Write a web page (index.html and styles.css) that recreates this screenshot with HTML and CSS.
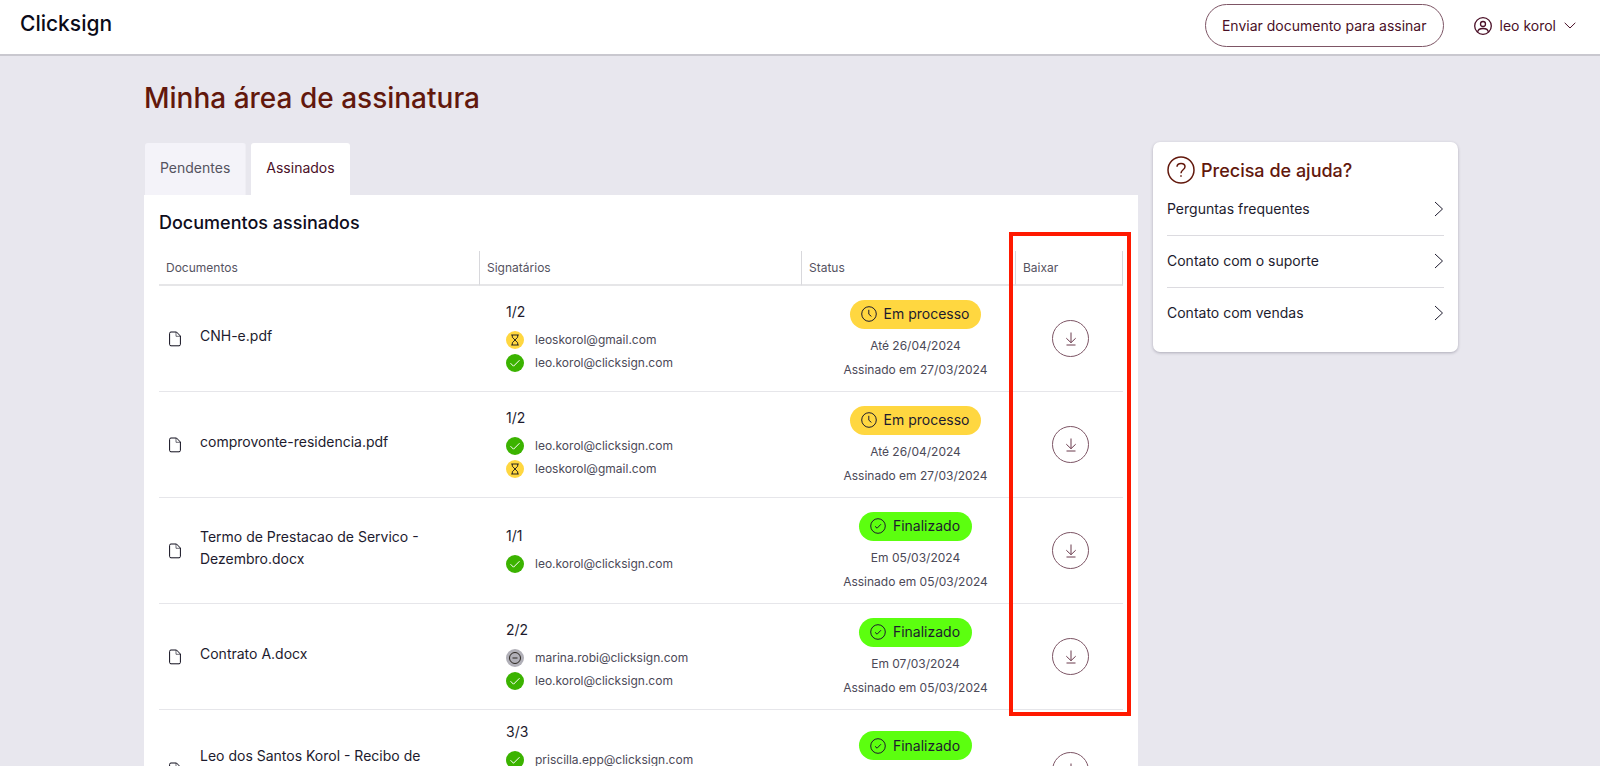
FILE: index.html
```html
<!DOCTYPE html>
<html lang="pt-BR">
<head>
<meta charset="utf-8">
<meta name="viewport" content="width=device-width, initial-scale=1">
<title>Minha área de assinatura</title>
<link rel="stylesheet" href="styles.css">
</head>
<body>
<svg class="sprite" aria-hidden="true">
  <symbol id="file" viewBox="0 0 12 16"><path d="M7.500 1H2Q.6 1 .6 2.400V13.400Q.6 14.800 2 14.800H10Q11.400 14.800 11.400 13.400V5Z"/><path d="M7 1V5.300H11.400" opacity=".6"/></symbol>
  <symbol id="hourglass" viewBox="0 0 18 18"><path d="M5.200 4H12.800M5.200 14H12.800M6.300 4V6.200L9 9L6.300 11.800V14M11.700 4V6.200L9 9L11.700 11.800V14"/></symbol>
  <symbol id="check" viewBox="0 0 18 18"><path d="M4.500 9.200L7.500 12.200L13.500 6.200"/></symbol>
  <symbol id="minus" viewBox="0 0 18 18"><circle cx="9" cy="9" r="5.500"/><path d="M6.500 9H11.500"/></symbol>
  <symbol id="clock" viewBox="0 0 16 16"><circle cx="8" cy="8" r="7.300"/><path d="M7.800 3.800V8.200L10.400 10.400"/></symbol>
  <symbol id="done" viewBox="0 0 16 16"><circle cx="8" cy="8" r="7.300"/><path d="M5 8.300L7.100 10.200L11 6.200"/></symbol>
  <symbol id="download" viewBox="0 0 12 14"><path d="M6 .5V10.500M1.300 6.200L6 10.700L10.700 6.200M1.500 13H10.500"/></symbol>
  <symbol id="right" viewBox="0 0 10 16"><path d="M1 1L8.500 8L1 15"/></symbol>
</svg>
<header class="topbar">
  <a class="logo" href="#">Clicksign</a>
  <div class="actions">
    <button class="send" type="button">Enviar documento para assinar</button>
    <button class="user" type="button">
      <svg class="avatar" viewBox="0 0 18 18"><circle cx="9" cy="9" r="8.300"/><circle cx="9" cy="7" r="2.500"/><path d="M3.600 15.200Q4 11.500 9 11.500T14.400 15.200"/></svg>
      leo korol
      <svg class="caret" viewBox="0 0 12 7"><path d="M.7 .8L6 6L11.300 .8"/></svg>
    </button>
  </div>
</header>
<main class="page">
  <h1 class="title">Minha área de assinatura</h1>
  <div class="columns">
    <section class="documents">
      <nav class="tabs">
        <a class="tab" href="#">Pendentes</a>
        <a class="tab active" href="#">Assinados</a>
      </nav>
      <div class="panel">
        <h2 class="heading">Documentos assinados</h2>
        <div class="table-wrap">
        <table class="table">
          <colgroup><col class="c-doc"><col class="c-sign"><col class="c-status"><col class="c-get"></colgroup>
          <thead><tr><th>Documentos</th><th>Signatários</th><th>Status</th><th>Baixar</th></tr></thead>
          <tbody>
            <tr>
              <td><div class="doc"><svg class="file"><use href="#file"/></svg><span class="name">CNH-e.pdf</span></div></td>
              <td><div class="signers"><p class="count">1/2</p><ul class="list">
                <li><svg class="dot wait"><use href="#hourglass"/></svg>leoskorol@gmail.com</li>
                <li><svg class="dot ok"><use href="#check"/></svg>leo.korol@clicksign.com</li></ul></div></td>
              <td><div class="status"><span class="badge progress"><svg><use href="#clock"/></svg>Em processo</span><span>Até 26/04/2024</span><span>Assinado em 27/03/2024</span></div></td>
              <td><button class="get" type="button" aria-label="Baixar"><svg><use href="#download"/></svg></button></td>
            </tr>
            <tr>
              <td><div class="doc"><svg class="file"><use href="#file"/></svg><span class="name">comprovonte-residencia.pdf</span></div></td>
              <td><div class="signers"><p class="count">1/2</p><ul class="list">
                <li><svg class="dot ok"><use href="#check"/></svg>leo.korol@clicksign.com</li>
                <li><svg class="dot wait"><use href="#hourglass"/></svg>leoskorol@gmail.com</li></ul></div></td>
              <td><div class="status"><span class="badge progress"><svg><use href="#clock"/></svg>Em processo</span><span>Até 26/04/2024</span><span>Assinado em 27/03/2024</span></div></td>
              <td><button class="get" type="button" aria-label="Baixar"><svg><use href="#download"/></svg></button></td>
            </tr>
            <tr>
              <td><div class="doc"><svg class="file"><use href="#file"/></svg><span class="name">Termo de Prestacao de Servico - Dezembro.docx</span></div></td>
              <td><div class="signers"><p class="count">1/1</p><ul class="list">
                <li><svg class="dot ok"><use href="#check"/></svg>leo.korol@clicksign.com</li></ul></div></td>
              <td><div class="status"><span class="badge final"><svg><use href="#done"/></svg>Finalizado</span><span>Em 05/03/2024</span><span>Assinado em 05/03/2024</span></div></td>
              <td><button class="get" type="button" aria-label="Baixar"><svg><use href="#download"/></svg></button></td>
            </tr>
            <tr>
              <td><div class="doc"><svg class="file"><use href="#file"/></svg><span class="name">Contrato A.docx</span></div></td>
              <td><div class="signers"><p class="count">2/2</p><ul class="list">
                <li><svg class="dot off"><use href="#minus"/></svg>marina.robi@clicksign.com</li>
                <li><svg class="dot ok"><use href="#check"/></svg>leo.korol@clicksign.com</li></ul></div></td>
              <td><div class="status"><span class="badge final"><svg><use href="#done"/></svg>Finalizado</span><span>Em 07/03/2024</span><span>Assinado em 05/03/2024</span></div></td>
              <td><button class="get" type="button" aria-label="Baixar"><svg><use href="#download"/></svg></button></td>
            </tr>
            <tr class="tall">
              <td><div class="doc"><svg class="file"><use href="#file"/></svg><span class="name">Leo dos Santos Korol - Recibo de</span></div></td>
              <td><div class="signers"><p class="count">3/3</p><ul class="list">
                <li><svg class="dot ok"><use href="#check"/></svg>priscilla.epp@clicksign.com</li></ul></div></td>
              <td><div class="status"><span class="badge final"><svg><use href="#done"/></svg>Finalizado</span></div></td>
              <td><button class="get" type="button" aria-label="Baixar"><svg><use href="#download"/></svg></button></td>
            </tr>
          </tbody>
        </table>
        <div class="highlight"></div>
        </div>
      </div>
    </section>
    <aside class="help">
      <h2 class="help-title"><svg class="question" viewBox="0 0 28 28"><circle cx="14" cy="14" r="13"/><path d="M10 10.800C10.200 6.400 18 6.400 18 10.800C18 14 14 13.500 14 17.200M14 19.200V20.800"/></svg>Precisa de ajuda?</h2>
      <a class="help-link" href="#">Perguntas frequentes<svg><use href="#right"/></svg></a>
      <a class="help-link" href="#">Contato com o suporte<svg><use href="#right"/></svg></a>
      <a class="help-link" href="#">Contato com vendas<svg><use href="#right"/></svg></a>
    </aside>
  </div>
</main>
</body>
</html>
```
FILE: styles.css
```css
* { box-sizing: border-box; }
html, body { height: 100%; }
body {
  margin: 0;
  display: flex;
  flex-direction: column;
  background: #e8e7ee;
  color: #1d1b2e;
  font-family: Inter, "Liberation Sans", sans-serif;
  font-size: 14px;
  line-height: 22px;
}
h1, h2, p, ul { margin: 0; padding: 0; }
ul { list-style: none; }
a { color: inherit; text-decoration: none; }
button { font: inherit; color: inherit; background: none; border: 0; padding: 0; }
svg { fill: none; stroke: currentColor; flex: none; }
.sprite { position: absolute; width: 0; height: 0; }

.topbar {
  flex: none;
  display: flex;
  align-items: flex-start;
  justify-content: space-between;
  height: 56px;
  padding: 4px 24px 0 20px;
  background: #fff;
  border-bottom: 2px solid #c9c8cf;
}
.logo { padding-top: 7px; font-size: 21px; font-weight: 500; line-height: 26px; color: #0b0b18; }
.actions { display: flex; align-items: center; gap: 30px; color: #4a1027; }
.send { height: 43px; padding: 0 16px; border: 1px solid #7d5565; border-radius: 22px; }
.user { display: flex; align-items: center; gap: 8px; }
.avatar { width: 18px; height: 18px; stroke-width: 1.3; }
.caret { width: 12px; height: 7px; }

.page { flex: 1; min-height: 0; overflow: auto; scrollbar-width: none; padding: 24px 142px 0 144px; }
.title { font-size: 28px; font-weight: 500; line-height: 36px; color: #62180c; margin-bottom: 26px; }
.columns { display: flex; align-items: flex-start; gap: 15px; }
.documents { flex: 1; min-width: 0; }
.tabs { display: flex; gap: 5px; padding: 1px 0 0 1px; }
.tab { height: 52px; padding: 14px; border-radius: 3px 3px 0 0; background: #f4f3f9; color: #55535f; border-right: 1px solid #efeef4; }
.tab:first-child { padding: 14px 15px; }
.tab.active { padding: 14px 15px; background: #fff; color: #4a1027; border: 0; }
.panel { background: #fff; padding: 16px 15px 0; }
.heading { font-size: 18px; font-weight: 500; line-height: 24px; margin-bottom: 16px; color: #0f0d1c; }

.table-wrap { position: relative; }
.table { width: 100%; table-layout: fixed; border-collapse: separate; border-spacing: 0; }
.c-doc { width: 321px; }
.c-sign { width: 322px; }
.c-get { width: 107px; }
th {
  height: 35px;
  padding: 0 7px;
  text-align: left;
  font-size: 12px;
  font-weight: 400;
  color: #55535f;
  border-right: 1px solid #d8d8dc;
  border-bottom: 2px solid #e6e6e8;
}
td { height: 106px; padding: 0; vertical-align: middle; border-bottom: 1px solid #e6e6ea; }
td:last-child { padding-left: 2px; }
.doc { display: flex; align-items: center; gap: 19px; padding: 0 48px 0 10px; }
.file { width: 12px; height: 16px; color: #0f0d1c; }
.name { padding-bottom: 6px; }
.signers { padding: 0 0 4px 26px; }
.count { margin-bottom: 8px; }
.list { display: grid; gap: 5px; font-size: 12px; line-height: 18px; color: #4b4957; }
.list li { display: flex; align-items: center; gap: 11px; }
.dot { width: 18px; height: 18px; border-radius: 50%; color: #2b2620; }
.dot.wait { background: #ffd740; }
.dot.ok { background: #3bb300; color: #fff; }
.dot.off { background: #b1b0b8; }
.status {
  display: flex;
  flex-direction: column;
  align-items: center;
  gap: 8px;
  min-height: 78px;
  padding-left: 13px;
  font-size: 12px;
  line-height: 16px;
  color: #4b4957;
}
.badge { display: flex; align-items: center; gap: 7px; height: 29px; margin-bottom: 1px; padding: 0 12px 0 11px; border-radius: 15px; font-size: 14px; color: #1d1b2e; }
.badge svg { width: 16px; height: 16px; }
.badge.progress { background: #ffd740; }
.badge.final { background: #5cff0f; }
.get { display: grid; place-items: center; width: 37px; height: 37px; margin: 0 auto; border: 1px solid #7d5565; border-radius: 50%; color: #6a3a4d; }
.get svg { width: 12px; height: 14px; }
.tall td { height: 121px; }
.tall .name { min-height: 50px; }
.tall .signers { min-height: 98px; }
.highlight { position: absolute; top: -19px; right: -8px; width: 122px; height: 484px; border: 4px solid #ff1900; pointer-events: none; }

.help { width: 305px; padding: 14px 14px 12px; background: #fff; border-radius: 7px; box-shadow: 0 1px 3px rgba(40, 35, 60, .3); }
.help-title { display: flex; align-items: center; gap: 6px; font-size: 18px; font-weight: 500; line-height: 27px; color: #62180c; }
.question { width: 28px; height: 28px; stroke-width: 1.5; }
.help-link { display: flex; align-items: center; justify-content: space-between; height: 52px; padding-bottom: 2px; border-bottom: 1px solid #dcdbe0; }
.help-link svg { width: 10px; height: 16px; }
.help-link:last-child { border-bottom: 0; }
```
